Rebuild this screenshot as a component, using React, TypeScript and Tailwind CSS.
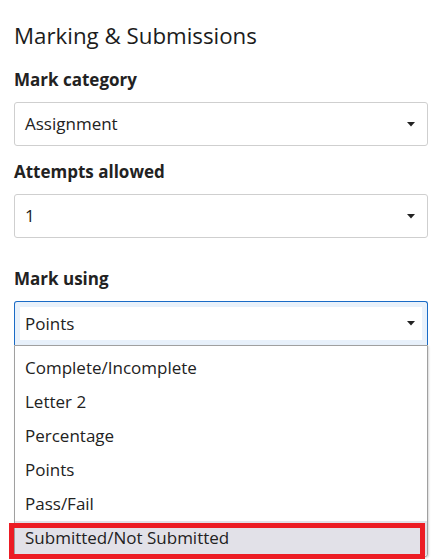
const options = [
  "Complete/Incomplete",
  "Letter 2",
  "Percentage",
  "Points",
  "Pass/Fail",
  "Submitted/Not Submitted",
];

function Caret() {
  return (
    <svg width="8" height="5" viewBox="0 0 8 5" className="shrink-0">
      <path d="M0 0 L8 0 L4 4.5 Z" fill="#222" />
    </svg>
  );
}

function Select({ value }: { value: string }) {
  return (
    <div className="h-[44px] flex items-center justify-between pl-[10px] pr-[12px] border border-[#cfcfcf] rounded-[3px] bg-white text-[17px] text-[#222]">
      <span>{value}</span>
      <Caret />
    </div>
  );
}

export default function App() {
  return (
    <div
      className="w-[433px] h-[560px] bg-white pl-[14px] pr-[5px] pt-[20px] overflow-hidden text-[#222]"
      style={{ fontFamily: '"Open Sans", sans-serif' }}
    >
      <h2 className="text-[22.3px] leading-[32px] font-medium text-[#1c1c1c]">Marking &amp; Submissions</h2>

      <label className="block mt-[16px] text-[17px] font-bold leading-[24px]">Mark category</label>
      <div className="mt-[10px]">
        <Select value="Assignment" />
      </div>

      <label className="block mt-[14px] text-[17px] font-bold leading-[24px]">Attempts allowed</label>
      <div className="mt-[10px]">
        <Select value="1" />
      </div>

      <label className="block mt-[29px] text-[17px] font-bold leading-[24px]">Mark using</label>
      <div className="mt-[10px] relative">
        <div className="h-[44px] flex items-center justify-between pl-[10px] pr-[12px] border border-[#1a6bc6] border-b-0 rounded-t-[3px] bg-white shadow-[inset_0_0_0_5px_#e8f1fb] text-[17px]">
          <span>Points</span>
          <Caret />
        </div>
        <div className="border border-[#a0a0a0] rounded-b-[3px] bg-white shadow-[1px_1px_2px_rgba(0,0,0,0.15)] pt-[5px] pb-[1px]">
          {options.map((o, i) => (
            <div
              key={o}
              className={`h-[34px] flex items-center px-[10px] text-[17px] ${i === options.length - 1 ? "bg-[#e2e1e8]" : ""}`}
            >
              {o}
            </div>
          ))}
        </div>
        <div className="absolute left-[-5px] right-[3px] bottom-[-2px] h-[36px] border-[5px] border-[#ec1c24] pointer-events-none" />
      </div>
    </div>
  );
}
